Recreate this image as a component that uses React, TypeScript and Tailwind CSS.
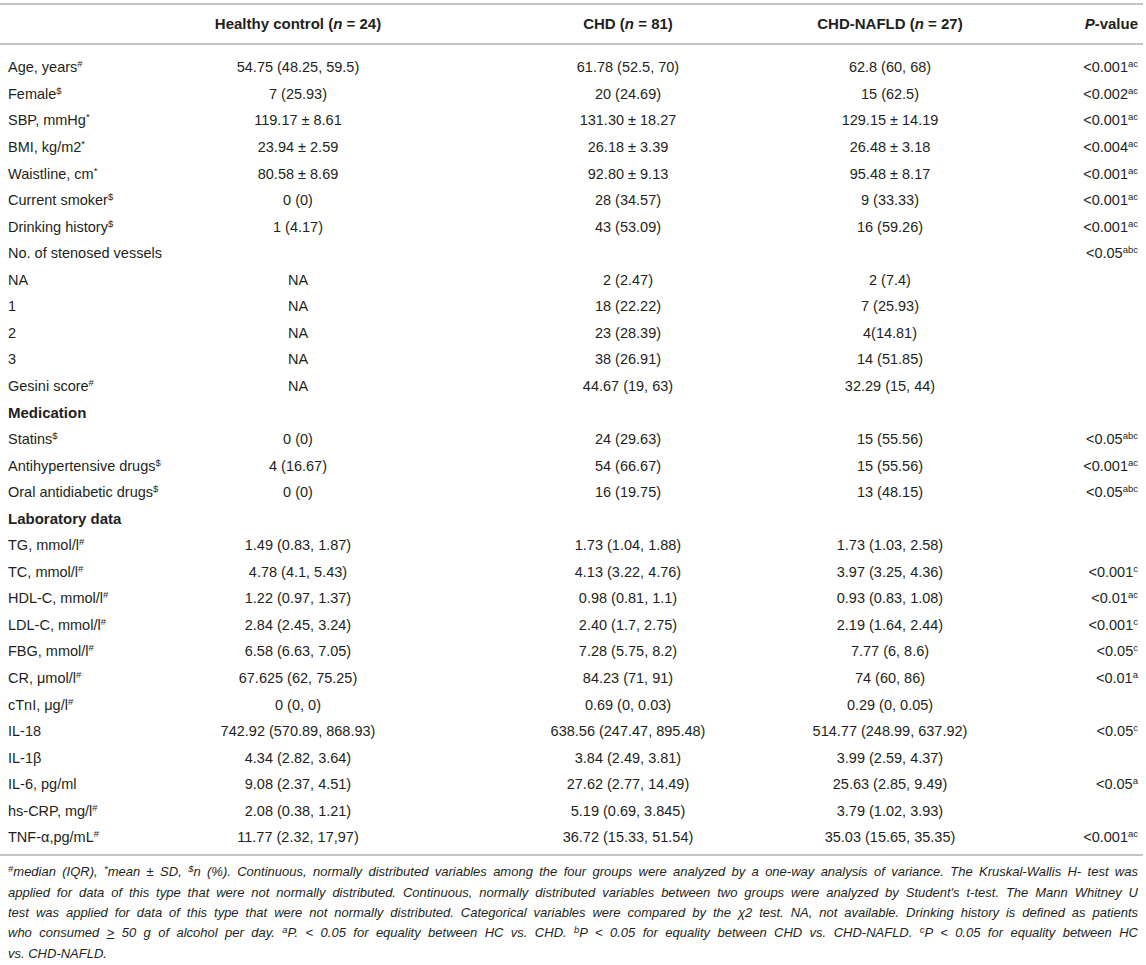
import React from "react";

type Row = {
  label: string;
  sup?: string;
  bold?: boolean;
  c1?: string;
  c2?: string;
  c3?: string;
  p?: string;
  psup?: string;
};

const rows: Row[] = [
  { label: "Age, years", sup: "#", c1: "54.75 (48.25, 59.5)", c2: "61.78 (52.5, 70)", c3: "62.8 (60, 68)", p: "<0.001", psup: "ac" },
  { label: "Female", sup: "$", c1: "7 (25.93)", c2: "20 (24.69)", c3: "15 (62.5)", p: "<0.002", psup: "ac" },
  { label: "SBP, mmHg", sup: "*", c1: "119.17 ± 8.61", c2: "131.30 ± 18.27", c3: "129.15 ± 14.19", p: "<0.001", psup: "ac" },
  { label: "BMI, kg/m2", sup: "*", c1: "23.94 ± 2.59", c2: "26.18 ± 3.39", c3: "26.48 ± 3.18", p: "<0.004", psup: "ac" },
  { label: "Waistline, cm", sup: "*", c1: "80.58 ± 8.69", c2: "92.80 ± 9.13", c3: "95.48 ± 8.17", p: "<0.001", psup: "ac" },
  { label: "Current smoker", sup: "$", c1: "0 (0)", c2: "28 (34.57)", c3: "9 (33.33)", p: "<0.001", psup: "ac" },
  { label: "Drinking history", sup: "$", c1: "1 (4.17)", c2: "43 (53.09)", c3: "16 (59.26)", p: "<0.001", psup: "ac" },
  { label: "No. of stenosed vessels", p: "<0.05", psup: "abc" },
  { label: "NA", c1: "NA", c2: "2 (2.47)", c3: "2 (7.4)" },
  { label: "1", c1: "NA", c2: "18 (22.22)", c3: "7 (25.93)" },
  { label: "2", c1: "NA", c2: "23 (28.39)", c3: "4(14.81)" },
  { label: "3", c1: "NA", c2: "38 (26.91)", c3: "14 (51.85)" },
  { label: "Gesini score", sup: "#", c1: "NA", c2: "44.67 (19, 63)", c3: "32.29 (15, 44)" },
  { label: "Medication", bold: true },
  { label: "Statins", sup: "$", c1: "0 (0)", c2: "24 (29.63)", c3: "15 (55.56)", p: "<0.05", psup: "abc" },
  { label: "Antihypertensive drugs", sup: "$", c1: "4 (16.67)", c2: "54 (66.67)", c3: "15 (55.56)", p: "<0.001", psup: "ac" },
  { label: "Oral antidiabetic drugs", sup: "$", c1: "0 (0)", c2: "16 (19.75)", c3: "13 (48.15)", p: "<0.05", psup: "abc" },
  { label: "Laboratory data", bold: true },
  { label: "TG, mmol/l", sup: "#", c1: "1.49 (0.83, 1.87)", c2: "1.73 (1.04, 1.88)", c3: "1.73 (1.03, 2.58)" },
  { label: "TC, mmol/l", sup: "#", c1: "4.78 (4.1, 5.43)", c2: "4.13 (3.22, 4.76)", c3: "3.97 (3.25, 4.36)", p: "<0.001", psup: "c" },
  { label: "HDL-C, mmol/l", sup: "#", c1: "1.22 (0.97, 1.37)", c2: "0.98 (0.81, 1.1)", c3: "0.93 (0.83, 1.08)", p: "<0.01", psup: "ac" },
  { label: "LDL-C, mmol/l", sup: "#", c1: "2.84 (2.45, 3.24)", c2: "2.40 (1.7, 2.75)", c3: "2.19 (1.64, 2.44)", p: "<0.001", psup: "c" },
  { label: "FBG, mmol/l", sup: "#", c1: "6.58 (6.63, 7.05)", c2: "7.28 (5.75, 8.2)", c3: "7.77 (6, 8.6)", p: "<0.05", psup: "c" },
  { label: "CR, μmol/l", sup: "#", c1: "67.625 (62, 75.25)", c2: "84.23 (71, 91)", c3: "74 (60, 86)", p: "<0.01", psup: "a" },
  { label: "cTnI, μg/l", sup: "#", c1: "0 (0, 0)", c2: "0.69 (0, 0.03)", c3: "0.29 (0, 0.05)" },
  { label: "IL-18", c1: "742.92 (570.89, 868.93)", c2: "638.56 (247.47, 895.48)", c3: "514.77 (248.99, 637.92)", p: "<0.05", psup: "c" },
  { label: "IL-1β", c1: "4.34 (2.82, 3.64)", c2: "3.84 (2.49, 3.81)", c3: "3.99 (2.59, 4.37)" },
  { label: "IL-6, pg/ml", c1: "9.08 (2.37, 4.51)", c2: "27.62 (2.77, 14.49)", c3: "25.63 (2.85, 9.49)", p: "<0.05", psup: "a" },
  { label: "hs-CRP, mg/l", sup: "#", c1: "2.08 (0.38, 1.21)", c2: "5.19 (0.69, 3.845)", c3: "3.79 (1.02, 3.93)" },
  { label: "TNF-α,pg/mL", sup: "#", c1: "11.77 (2.32, 17,97)", c2: "36.72 (15.33, 51.54)", c3: "35.03 (15.65, 35.35)", p: "<0.001", psup: "ac" },
];

function Sup({ children }: { children: React.ReactNode }) {
  return <span className="relative -top-[5px] text-[9.5px] leading-none">{children}</span>;
}

function FSup({ children }: { children: React.ReactNode }) {
  return <span className="relative -top-[4px] text-[9.5px] leading-none">{children}</span>;
}

const grid = "grid grid-cols-[180px_236px_374px_200px_156px]";

export default function App() {
  return (
    <div
      className="w-[1146px] h-[965px] bg-white text-[#231f20] overflow-hidden"
      style={{ fontFamily: '"Liberation Sans", Arial, sans-serif' }}
    >
      <div className="pt-[3px]">
        <div className="h-[2px] bg-[#c4c4c4] mr-[3px]" />
        <div className={`${grid} h-[38px] items-center text-[15px] font-bold whitespace-nowrap`}>
          <div />
          <div className="text-center">
            Healthy control (<i>n</i> = 24)
          </div>
          <div className="text-center pl-[50px]">
            CHD (<i>n</i> = 81)
          </div>
          <div className="text-center">
            CHD-NAFLD (<i>n</i> = 27)
          </div>
          <div className="text-right pr-[8px]">
            <i>P</i>-value
          </div>
        </div>
        <div className="h-[2px] bg-[#c4c4c4] mr-[3px]" />
        <div className="pt-[10px] pb-[3px]">
          {rows.map((r, i) => (
            <div key={i} className={`${grid} h-[26.55px] items-center text-[14.5px] whitespace-nowrap`}>
              <div className={`pl-[8px] ${r.bold ? "font-bold text-[15px]" : ""}`}>
                {r.label}
                {r.sup && <Sup>{r.sup}</Sup>}
              </div>
              <div className="text-center">{r.c1}</div>
              <div className="text-center pl-[50px]">{r.c2}</div>
              <div className="text-center">{r.c3}</div>
              <div className="text-right pr-[8px]">
                {r.p}
                {r.psup && <Sup>{r.psup}</Sup>}
              </div>
            </div>
          ))}
        </div>
        <div className="h-[2px] bg-[#c4c4c4] mr-[3px]" />
        <div className="px-[8px] pt-[6px] text-[13px] italic leading-[20.3px] whitespace-nowrap">
          <div className="[text-align-last:justify]">
            <FSup>#</FSup>median (IQR), <FSup>*</FSup>mean ± SD, <FSup>$</FSup>n (%). Continuous, normally distributed variables among the four groups were analyzed by a one-way analysis of variance. The Kruskal-Wallis H- test was
          </div>
          <div className="[text-align-last:justify] whitespace-normal">
            applied for data of this type that were not normally distributed. Continuous, normally distributed variables between two groups were analyzed by Student's t-test. The Mann Whitney U
          </div>
          <div className="[text-align-last:justify] whitespace-normal">
            test was applied for data of this type that were not normally distributed. Categorical variables were compared by the χ2 test. NA, not available. Drinking history is defined as patients
          </div>
          <div className="[text-align-last:justify] whitespace-normal">
            who consumed <span className="underline">&gt;</span> 50 g of alcohol per day. <FSup>a</FSup>P. &lt; 0.05 for equality between HC vs. CHD. <FSup>b</FSup>P &lt; 0.05 for equality between CHD vs. CHD-NAFLD. <FSup>c</FSup>P &lt; 0.05 for equality between HC
          </div>
          <div>vs. CHD-NAFLD.</div>
        </div>
      </div>
    </div>
  );
}
